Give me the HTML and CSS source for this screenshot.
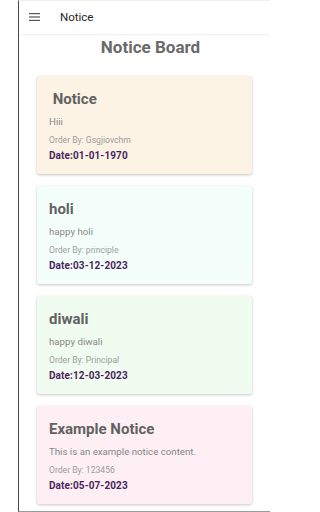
FILE: index.html
```html
<!DOCTYPE html>
<html>
<head>
<meta charset="utf-8">
<link rel="stylesheet" href="styles.css">
</head>
<body>
<div class="device">
  <header class="toolbar">
    <svg class="menu" width="12" height="8" viewBox="0 0 12 8">
      <rect x="0" y="0" width="11" height="1.2" fill="#555"/>
      <rect x="0" y="3.4" width="11" height="1.2" fill="#555"/>
      <rect x="0" y="6.8" width="11" height="1.2" fill="#555"/>
    </svg>
    <span class="toolbar-title">Notice</span>
  </header>
  <h1 class="board-title">Notice Board</h1>
  <main class="list">
    <section class="card cream">
      <h2 class="card-title">&nbsp;Notice</h2>
      <p class="card-body">Hiii</p>
      <p class="card-by">Order By: Gsgjiovchm</p>
      <p class="card-date">Date:01-01-1970</p>
    </section>
    <section class="card mint">
      <h2 class="card-title">holi</h2>
      <p class="card-body">happy holi</p>
      <p class="card-by">Order By: principle</p>
      <p class="card-date">Date:03-12-2023</p>
    </section>
    <section class="card green">
      <h2 class="card-title">diwali</h2>
      <p class="card-body">happy diwali</p>
      <p class="card-by">Order By: Principal</p>
      <p class="card-date">Date:12-03-2023</p>
    </section>
    <section class="card pink">
      <h2 class="card-title">Example Notice</h2>
      <p class="card-body">This is an example notice content.</p>
      <p class="card-by">Order By: 123456</p>
      <p class="card-date">Date:05-07-2023</p>
    </section>
  </main>
</div>
</body>
</html>
```
FILE: styles.css
```css
html, body {
  margin: 0;
  padding: 0;
  background: #ffffff;
}
body {
  font-family: Roboto, "Liberation Sans", sans-serif;
  width: 288px;
  height: 512px;
  overflow: hidden;
}
.device {
  margin-left: 18px;
  width: 251px;
  height: 510px;
  border-left: 1px solid #4a4a4a;
  border-bottom: 1px solid #9a9a9a;
  border-top: 1px solid #f0f0f0;
  box-sizing: content-box;
  overflow: hidden;
}
.toolbar {
  height: 33px;
  display: flex;
  align-items: center;
  padding-left: 10px;
  border-bottom: 1px solid #f3f3f3;
  box-shadow: 0 1px 2px rgba(0,0,0,0.03);
}
.menu {
  display: block;
  margin-top: -1px;
}
.toolbar-title {
  margin-left: 19px;
  font-size: 11.5px;
  color: #1f1f1f;
  margin-top: -1px;
}
.board-title {
  margin: 0;
  padding-left: 12px;
  text-align: center;
  font-size: 17px;
  font-weight: 700;
  color: #6a6a6a;
  line-height: 22px;
  margin-top: 1px;
}
.list {
  display: flex;
  flex-direction: column;
  gap: 12px;
  padding: 18px 18px 0 18px;
}
.card {
  height: 98px;
  flex-shrink: 0;
  box-sizing: border-box;
  padding: 12px 12px 0 12px;
  border-radius: 2px;
  box-shadow: 0 1px 3px rgba(0,0,0,0.22), 0 0 1px rgba(0,0,0,0.08);
  display: flex;
  flex-direction: column;
}
.cream { background: #fdf3e5; }
.mint { background: #f4fffb; }
.green { background: #effcef; }
.pink { background: #fdeff3; }
.card-title {
  margin: 0;
  font-size: 15px;
  font-weight: 700;
  color: #626262;
  line-height: 22px;
}
.card-body {
  margin: 6px 0 0 0;
  font-size: 9.7px;
  color: #888888;
  line-height: 12px;
}
.card-by {
  margin: 6px 0 0 0;
  font-size: 8.6px;
  color: #9c9c9c;
  line-height: 12px;
}
.card-date {
  margin: 4px 0 0 0;
  font-size: 10px;
  font-weight: 700;
  color: #4b1f5e;
  line-height: 12px;
  letter-spacing: 0.1px;
}
```
